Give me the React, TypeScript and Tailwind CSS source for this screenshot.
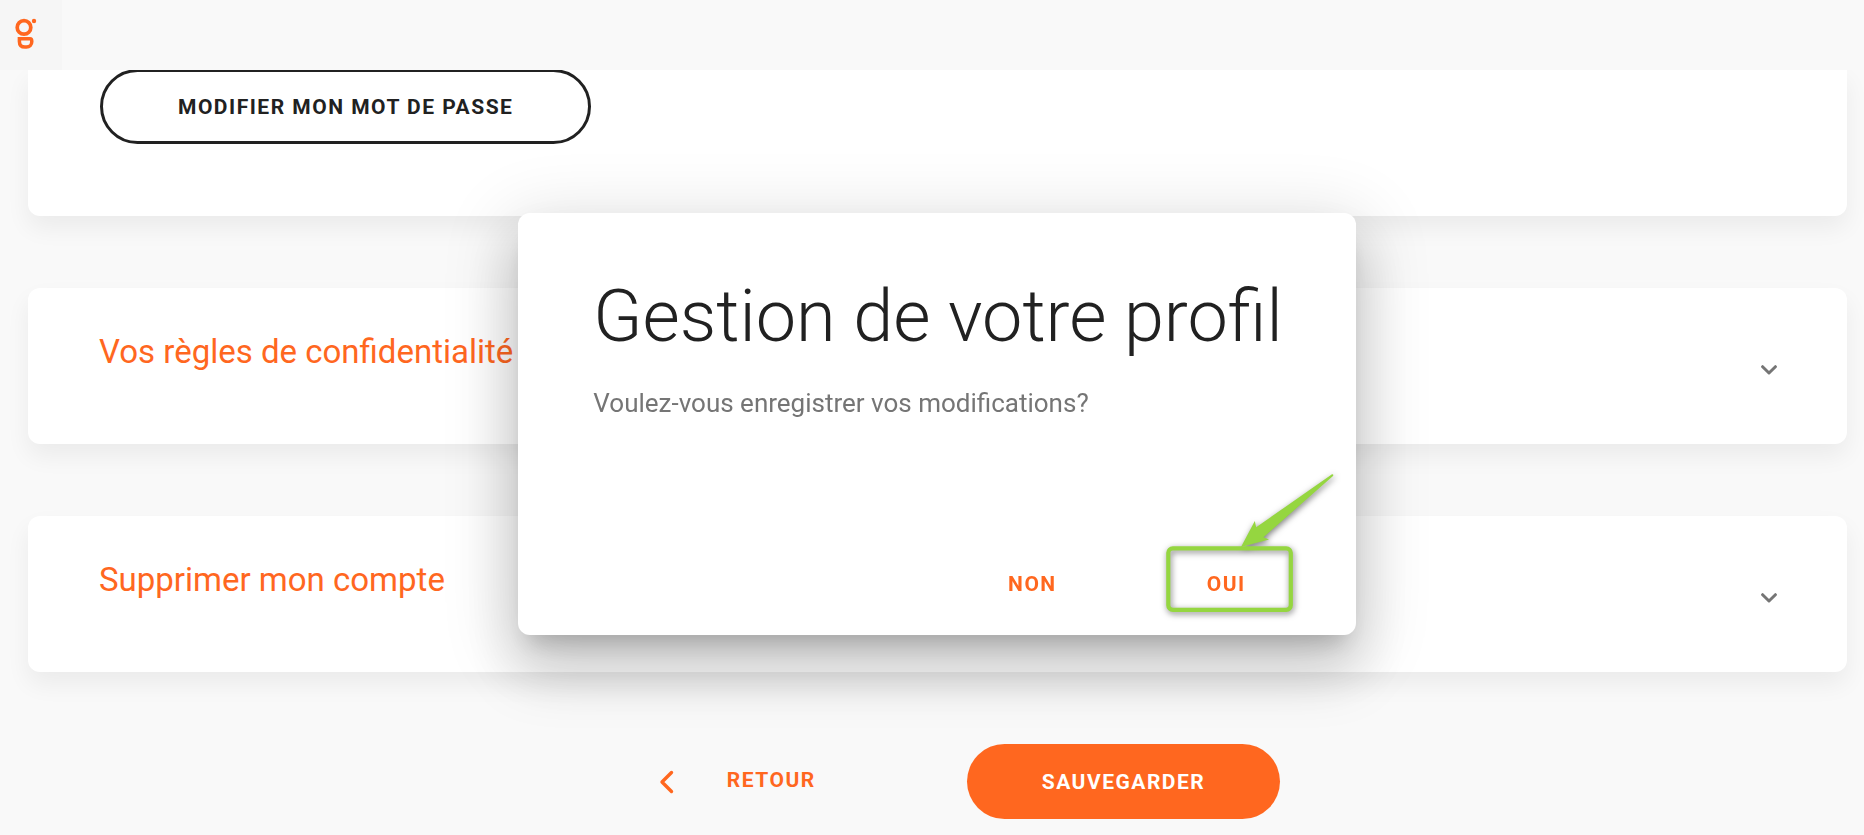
import React from "react";

const label = "text-[21px] leading-6 font-bold tracking-[1.5px] uppercase";
const card = "bg-white shadow-[0_12px_24px_rgba(0,0,0,0.06)]";

function Logo() {
  return (
    <svg width="36" height="44" viewBox="0 0 36 44" fill="none" aria-hidden="true">
      <circle cx="16" cy="15.4" r="6.8" stroke="#ff671f" strokeWidth="3.7" />
      <circle cx="26" cy="9" r="2.2" fill="#ff671f" />
      <path
        d="M11.4 26.8H22C23.5 26.8 23.8 28 23.8 29.5C23.8 33 21.5 35.1 18.5 35.1H17C13.5 35.1 11.4 33 11.4 29.5Z"
        stroke="#ff671f"
        strokeWidth="3.5"
      />
    </svg>
  );
}

function ChevronDown() {
  return (
    <svg width="16" height="10" viewBox="0 0 16 10" fill="none" aria-hidden="true">
      <path d="M1.6 1.7L8 8L14.4 1.7" stroke="#757575" strokeWidth="3" strokeLinecap="round" strokeLinejoin="round" />
    </svg>
  );
}

function Section({ title }: { title: string }) {
  return (
    <section className={`${card} rounded-xl`}>
      <h2>
        <button
          type="button"
          aria-expanded="false"
          className="flex w-full items-center justify-between pt-[44px] pr-[70px] pb-[36px] pl-[71px] text-left"
        >
          <span className="mb-[36px] text-[33px] leading-10 text-[#ff671f]">{title}</span>
          <ChevronDown />
        </button>
      </h2>
    </section>
  );
}

function Highlight() {
  return (
    <svg
      width="180"
      height="154"
      viewBox="0 0 180 154"
      fill="none"
      aria-hidden="true"
      className="pointer-events-none absolute right-4 bottom-[15px] overflow-visible drop-shadow-[1px_2px_3px_rgba(0,0,0,0.5)]"
    >
      <rect x="8.3" y="82.3" width="122.5" height="61.5" rx="4.5" stroke="#95d640" strokeWidth="4.2" />
      <path d="M81 81L94.8 55L96.2 61.3L172 8.2Q174 8 173 10L103.5 71.2L109 73.6Z" fill="#95d640" />
    </svg>
  );
}

export default function App() {
  return (
    <div className="min-h-screen bg-[#f9f9f9] font-[Roboto,sans-serif] text-[#212121]">
      <header className="fixed inset-x-0 top-0 z-10 flex h-[70px] bg-[#f9f9f9]">
        <a href="#accueil" aria-label="Accueil" className="flex w-[62px] bg-[#f6f6f6] pt-3 pl-2">
          <Logo />
        </a>
      </header>

      <main className="flex flex-col gap-[72px] pt-[69px] pr-[17px] pl-7">
        <section className={`${card} rounded-b-xl pb-[72px] pl-[72px]`}>
          <button type="button" className={`${label} flex h-[75px] items-center rounded-full border-3 border-[#212121] px-[75px]`}>
            Modifier mon mot de passe
          </button>
        </section>

        <Section title="Vos règles de confidentialité" />
        <Section title="Supprimer mon compte" />

        <div className="flex items-center justify-center gap-[76px] pb-4 pl-[64px]">
          <button type="button" className={`${label} flex items-center gap-[53px] pr-[75px] text-[#ff671f]`}>
            <svg width="15" height="24" viewBox="0 0 15 24" fill="none" aria-hidden="true">
              <path d="M12.5 2.5L3 12L12.5 21.5" stroke="#ff671f" strokeWidth="3.4" strokeLinecap="round" strokeLinejoin="round" />
            </svg>
            <span className="pb-1">Retour</span>
          </button>
          <button type="button" className={`${label} h-[75px] rounded-full bg-[#ff671f] px-[75px] text-white`}>
            Sauvegarder
          </button>
        </div>
      </main>

      <div className="fixed inset-0 z-20 flex items-center justify-center pt-[13px] pl-[10px]">
        <div
          role="dialog"
          aria-modal="true"
          aria-labelledby="dialog-title"
          className="relative rounded-xl bg-white shadow-[0_17px_23px_-11px_rgba(0,0,0,0.2),0_36px_57px_5px_rgba(0,0,0,0.14),0_14px_69px_12px_rgba(0,0,0,0.12)]"
        >
          <div className="pt-[62px] pr-[73px] pl-[75px]">
            <h1 id="dialog-title" className="text-[72px] leading-[84px] font-light">
              Gestion de votre profil
            </h1>
            <p className="mt-[26px] text-[26px] leading-9 text-[#757575]">Voulez-vous enregistrer vos modifications?</p>
          </div>
          <div className="mt-[125px] flex justify-end gap-[54px] pr-[62px] pb-[14px]">
            <button type="button" className={`${label} h-[75px] px-12 text-[#ff671f]`}>
              Non
            </button>
            <button type="button" className={`${label} h-[75px] px-12 text-[#ff671f]`}>
              Oui
            </button>
          </div>
          <Highlight />
        </div>
      </div>
    </div>
  );
}
